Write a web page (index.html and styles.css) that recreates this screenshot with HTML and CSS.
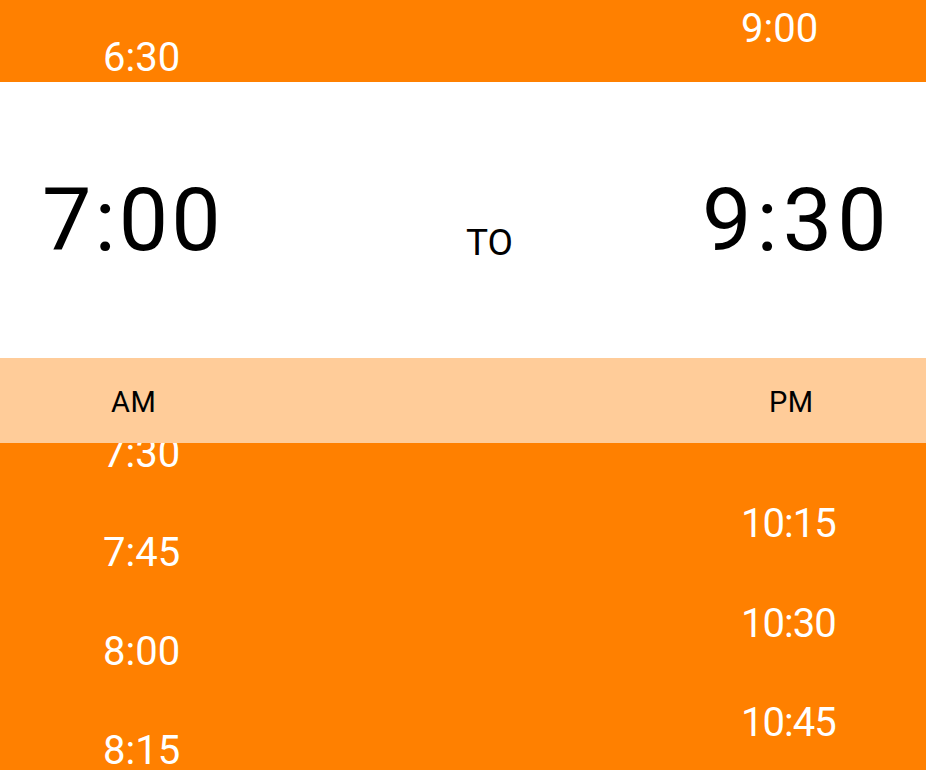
FILE: index.html
```html
<!DOCTYPE html>
<html lang="en">
<head>
<meta charset="utf-8">
<title>Time range picker</title>
<link rel="stylesheet" href="styles.css">
</head>
<body>
<div class="picker">
  <div class="row row-top">
    <div class="col col-left"><span class="wheel-item item-630">6:30</span></div>
    <div class="col col-right"><span class="wheel-item item-900">9:00</span></div>
  </div>
  <div class="row row-selected">
    <div class="col sel-left"><span class="big">7:00</span></div>
    <div class="col sel-mid"><span class="to">TO</span></div>
    <div class="col sel-right"><span class="big big-right">9:30</span></div>
  </div>
  <div class="row row-band">
    <div class="col band-left"><span class="meridiem">AM</span></div>
    <div class="col band-right"><span class="meridiem">PM</span></div>
  </div>
  <div class="row row-bottom">
    <div class="col list list-left">
      <span class="wheel-item">7:30</span>
      <span class="wheel-item">7:45</span>
      <span class="wheel-item">8:00</span>
      <span class="wheel-item">8:15</span>
    </div>
    <div class="col list list-right">
      <span class="wheel-item">10:15</span>
      <span class="wheel-item">10:30</span>
      <span class="wheel-item">10:45</span>
    </div>
  </div>
</div>
</body>
</html>
```
FILE: styles.css
```css
* { box-sizing: border-box; }
html, body {
  margin: 0;
  padding: 0;
  background: #ff8000;
}
body {
  font-family: Roboto, "Liberation Sans", sans-serif;
  width: 926px;
  height: 770px;
  overflow: hidden;
}
.picker {
  width: 926px;
  height: 770px;
  background: #ff8000;
  display: flex;
  flex-direction: column;
  overflow: hidden;
}
.row {
  display: grid;
  flex: none;
}
.wheel-item {
  display: block;
  font-size: 40px;
  line-height: 40px;
  color: #ffffff;
  white-space: nowrap;
}

/* top (above selection) */
.row-top {
  height: 82px;
  grid-template-columns: 741px 1fr;
  overflow: hidden;
}
.col-left { padding-left: 103px; }
.item-630 { margin-top: 38px; }
.item-900 { margin-top: 9px; }

/* selected white band */
.row-selected {
  height: 276px;
  background: #ffffff;
  grid-template-columns: 466px 236px 1fr;
}
.sel-left { padding-left: 42px; }
.big {
  display: block;
  margin-top: 94px;
  font-size: 88px;
  line-height: 88px;
  letter-spacing: 3px;
  color: #000;
  white-space: nowrap;
}
.big-right { letter-spacing: 5px; }
.to {
  display: block;
  margin-top: 142px;
  font-size: 37px;
  line-height: 37px;
  color: #000;
}

/* AM / PM band */
.row-band {
  height: 85px;
  background: #ffcc99;
  grid-template-columns: 769px 1fr;
}
.band-left { padding-left: 111px; }
.meridiem {
  display: block;
  margin-top: 30px;
  font-size: 29px;
  line-height: 29px;
  letter-spacing: 0.5px;
  color: #000;
}

/* bottom wheel rows */
.row-bottom {
  flex: 1;
  grid-template-columns: 741px 1fr;
  overflow: hidden;
}
.list {
  display: flex;
  flex-direction: column;
}
.list-left {
  padding-left: 103px;
  margin-top: -9px;
  gap: 59px;
}
.list-right {
  padding-top: 61px;
  gap: 59.5px;
}
.list-right .wheel-item { letter-spacing: -1px; }
```
